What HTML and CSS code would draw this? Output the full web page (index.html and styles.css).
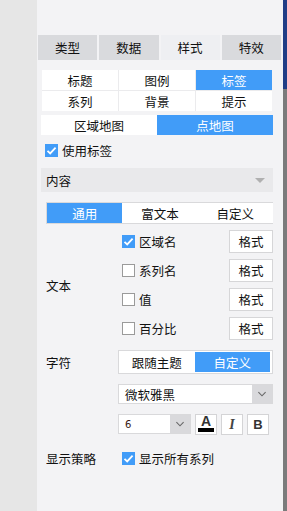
FILE: index.html
```html
<!DOCTYPE html>
<html lang="zh-CN">
<head>
<meta charset="UTF-8">
<title>样式</title>
<link rel="stylesheet" href="styles.css">
</head>
<body>
  <div class="side-left"></div>

  <div class="panel">

    <div class="tabs">
      <div class="tab">类型</div>
      <div class="tab">数据</div>
      <div class="tab active">样式</div>
      <div class="tab">特效</div>
    </div>

    <div class="subtabs">
      <div class="cell">标题</div>
      <div class="cell">图例</div>
      <div class="cell active">标签</div>
      <div class="cell">系列</div>
      <div class="cell">背景</div>
      <div class="cell">提示</div>
    </div>

    <div class="maptype">
      <div class="half">区域地图</div>
      <div class="half active">点地图</div>
    </div>

    <label class="check-row use-label">
      <span class="box on"><svg viewBox="0 0 13 13"><path d="M2.5 6.8 L5.2 9.4 L10.6 3.6"/></svg></span>
      <span>使用标签</span>
    </label>

    <div class="section-bar">
      <span>内容</span>
      <span class="tri"></span>
    </div>

    <div class="seg seg-content">
      <div class="seg-item active">通用</div>
      <div class="seg-item">富文本</div>
      <div class="seg-item">自定义</div>
    </div>

    <div class="form-row text-group">
      <div class="label">文本</div>
      <div class="rows">
        <div class="opt">
          <label class="check-row">
            <span class="box on"><svg viewBox="0 0 13 13"><path d="M2.5 6.8 L5.2 9.4 L10.6 3.6"/></svg></span>
            <span>区域名</span>
          </label>
          <button class="fmt">格式</button>
        </div>
        <div class="opt">
          <label class="check-row">
            <span class="box"></span>
            <span>系列名</span>
          </label>
          <button class="fmt">格式</button>
        </div>
        <div class="opt">
          <label class="check-row">
            <span class="box"></span>
            <span>值</span>
          </label>
          <button class="fmt">格式</button>
        </div>
        <div class="opt">
          <label class="check-row">
            <span class="box"></span>
            <span>百分比</span>
          </label>
          <button class="fmt">格式</button>
        </div>
      </div>
    </div>

    <div class="form-row char-row">
      <div class="label">字符</div>
      <div class="seg seg-char">
        <div class="seg-item">跟随主题</div>
        <div class="seg-item active">自定义</div>
      </div>
    </div>

    <div class="form-row font-row">
      <div class="label"></div>
      <div class="select">
        <span class="val">微软雅黑</span>
        <span class="arrow"><svg viewBox="0 0 20 20"><path d="M6 8 L10 12 L14 8"/></svg></span>
      </div>
    </div>

    <div class="form-row size-row">
      <div class="label"></div>
      <div class="tools">
        <div class="select small">
          <span class="val num">6</span>
          <span class="arrow"><svg viewBox="0 0 20 20"><path d="M6 8 L10 12 L14 8"/></svg></span>
        </div>
        <div class="tool color"><span class="a">A</span><span class="bar"></span></div>
        <div class="tool italic">I</div>
        <div class="tool bold">B</div>
      </div>
    </div>

    <div class="form-row show-row">
      <div class="label">显示策略</div>
      <label class="check-row">
        <span class="box on"><svg viewBox="0 0 13 13"><path d="M2.5 6.8 L5.2 9.4 L10.6 3.6"/></svg></span>
        <span>显示所有系列</span>
      </label>
    </div>

  </div>

  <div class="side-right"></div>
</body>
</html>
```

FILE: styles.css
```css
body {
  margin: 0;
  height: 511px;
  display: flex;
  font-family: "Noto Sans CJK SC", "Noto Sans", sans-serif;
  font-size: 12.5px;
  color: #111;
  background: #f3f3f5;
  overflow: hidden;
}
.side-left {
  width: 37px;
  background: #e6e6e6;
}
.side-right {
  width: 4px;
  background: linear-gradient(#203d86 0, #203d86 89px, #7b7b7b 89px);
}
.panel {
  width: 232px;
  padding: 35px 10px 0 4px;
  background: #f3f3f5;
}

/* top tabs */
.tabs {
  display: grid;
  grid-template-columns: repeat(4, 1fr);
  gap: 2px;
  margin: 0 -8px 0 -3px;
  height: 25px;
}
.tab {
  background: #d9dadd;
  display: flex;
  align-items: center;
  justify-content: center;
}
.tab.active {
  background: #eeeff2;
}

/* sub tabs */
.subtabs {
  margin: 10px 1px 0 1px;
  display: grid;
  grid-template-columns: repeat(3, 1fr);
  grid-auto-rows: 20px;
  gap: 1px;
  background: #ebebed;
}
.cell {
  background: #fff;
  display: flex;
  align-items: center;
  justify-content: center;
}
.cell.active, .half.active, .seg-item.active {
  background: #419cf8;
  color: #fff;
}

.maptype {
  margin-top: 4px;
  height: 20px;
  display: flex;
}
.half {
  flex: 1;
  background: #fff;
  display: flex;
  align-items: center;
  justify-content: center;
}

/* checkbox */
.check-row {
  display: flex;
  align-items: center;
  gap: 4px;
  line-height: 13px;
}
.box {
  width: 11px;
  height: 11px;
  border: 1px solid #9a9a9a;
  background: #fff;
  display: inline-flex;
}
.box.on {
  width: 13px;
  height: 13px;
  border: none;
  background: #419cf8;
}
.box svg {
  width: 13px;
  height: 13px;
}
.box path {
  fill: none;
  stroke: #fff;
  stroke-width: 1.8;
}
.use-label {
  margin: 9px 0 0 4px;
  height: 13px;
}

.section-bar {
  margin-top: 11px;
  height: 24px;
  background: #e9e9eb;
  display: flex;
  align-items: center;
  justify-content: space-between;
  padding: 0 8px 0 5px;
}
.tri {
  width: 0;
  height: 0;
  border-left: 5px solid transparent;
  border-right: 5px solid transparent;
  border-top: 5px solid #b0b0b0;
}

/* segmented controls */
.seg {
  display: flex;
  border: 1px solid #d9d9db;
  background: #fff;
}
.seg-item {
  flex: 1;
  display: flex;
  align-items: center;
  justify-content: center;
}
.seg-content {
  margin: 10px 0 0 5px;
  height: 20px;
  border-right: none;
}

.form-row {
  display: grid;
  grid-template-columns: 77px 1fr;
}
.label {
  padding-left: 5px;
  align-self: center;
}
.text-group {
  margin-top: 6px;
}
.rows {
  display: flex;
  flex-direction: column;
  gap: 6px;
}
.opt {
  display: flex;
  align-items: center;
  justify-content: space-between;
  height: 23px;
  padding-left: 4px;
}
.fmt {
  width: 44px;
  height: 23px;
  border: 1px solid #d6d6d8;
  background: #fff;
  font-family: inherit;
  font-size: 12.5px;
  color: #111;
  padding: 0;
}

.char-row {
  margin-top: 10px;
}
.seg-char {
  height: 20px;
  padding: 1px 2px 1px 0;
}

.select {
  height: 18px;
  border: 1px solid #d9d9db;
  background: #fff;
  display: flex;
  justify-content: space-between;
  align-items: stretch;
}
.select .val {
  padding-left: 6px;
  display: flex;
  align-items: center;
}
.select .arrow {
  width: 20px;
  background: #d9d9dc;
  display: flex;
  align-items: center;
  justify-content: center;
}
.arrow svg {
  width: 18px;
  height: 18px;
}
.arrow path {
  fill: none;
  stroke: #666;
  stroke-width: 1.2;
}
.font-row {
  margin-top: 10px;
}
.size-row {
  margin-top: 10px;
}
.tools {
  display: flex;
  gap: 4px;
}
.select.small {
  width: 71px;
}
.select .num {
  font-family: "DejaVu Sans", sans-serif;
  font-size: 10px;
  color: #3a1a10;
}
.tool {
  width: 20px;
  height: 19px;
  border: 1px solid #d4d4d6;
  background: #fff;
  display: flex;
  align-items: center;
  justify-content: center;
}
.color {
  flex-direction: column;
  justify-content: flex-end;
}
.color .a {
  font-family: "Liberation Sans", sans-serif;
  font-weight: bold;
  font-size: 14px;
  line-height: 12px;
  color: #333;
}
.color .bar {
  width: 16px;
  height: 4px;
  background: #000;
  margin: 1px 0 2px;
}
.italic {
  font-family: "Liberation Serif", serif;
  font-style: italic;
  font-weight: bold;
  font-size: 14px;
  color: #444;
}
.bold {
  font-family: "Liberation Sans", sans-serif;
  font-weight: bold;
  font-size: 13px;
  color: #333;
}
.show-row {
  margin-top: 14px;
}
.show-row .check-row {
  padding-left: 4px;
}
```
